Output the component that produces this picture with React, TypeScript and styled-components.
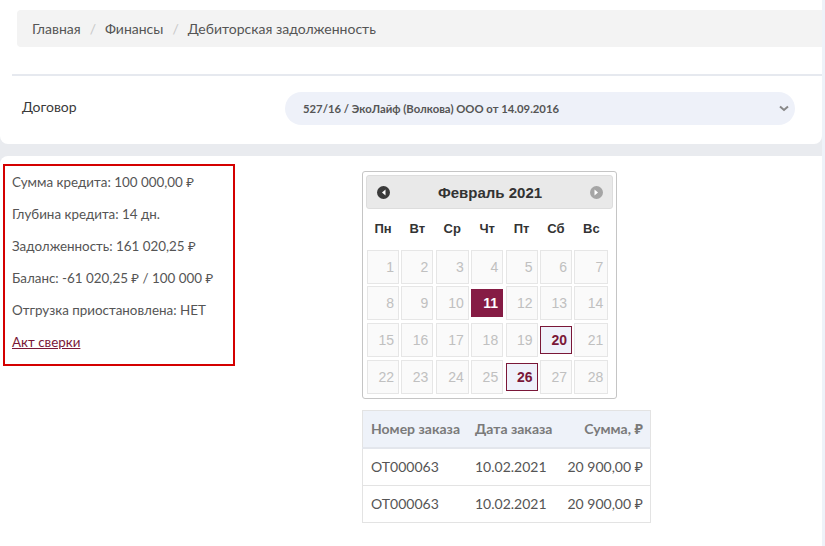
import styled, { createGlobalStyle } from 'styled-components';

const GlobalStyle = createGlobalStyle`
  html, body {
    margin: 0;
    padding: 0;
    background: #eef2f9;
  }
  body {
    font-family: Lato, "Noto Sans", sans-serif;
    color: #555;
  }
`;

const Page = styled.div`
  width: 822px;
  height: 546px;
  background: #e9ebef;
  display: flex;
  flex-direction: column;
  gap: 12px;
  overflow: hidden;
`;

const TopCard = styled.section`
  background: #fff;
  border-radius: 0 0 8px 8px;
  padding: 10px 0 19px 12px;
`;

const Breadcrumbs = styled.nav`
  display: flex;
  align-items: center;
  gap: 9px;
  height: 37px;
  margin-left: 5px;
  padding-left: 15px;
  background: #f3f3f3;
  border-radius: 4px 0 0 4px;
  font-size: 14px;
  color: #555;
`;

const Crumb = styled.span`
  color: #555;
`;

const Sep = styled.span`
  color: #c8c8c8;
`;

const Divider = styled.hr`
  margin: 27px 0 0;
  border: 0;
  border-top: 2px solid #e6e9ef;
`;

const ContractRow = styled.div`
  display: flex;
  align-items: center;
  height: 34px;
  margin-top: 15px;
`;

const ContractLabel = styled.label`
  width: 273px;
  box-sizing: border-box;
  padding: 0 0 4px 10px;
  font-size: 14px;
  color: #3a3a3a;
`;

const SelectBox = styled.div`
  width: 510px;
  height: 33px;
  border-radius: 17px;
  background: #eef1f9;
  display: flex;
  align-items: center;
  justify-content: space-between;
  padding: 0 6px 0 18px;
  box-sizing: border-box;
  font-size: 11.3px;
  font-weight: 700;
  color: #555;
`;

const BottomCard = styled.section`
  flex: 1;
  background: #fff;
  border-radius: 8px 0 0 0;
  display: flex;
  padding: 8px 0 0 3px;
  gap: 127px;
`;

const InfoBox = styled.div`
  width: 221px;
  height: 198px;
  border: 2px solid #d40000;
  padding: 0 0 0 7px;
  display: flex;
  flex-direction: column;
  font-size: 13.4px;
  color: #555;
`;

const InfoLine = styled.div`
  height: 32px;
  line-height: 32px;
`;

const ActLink = styled.a`
  height: 32px;
  line-height: 32px;
  color: #7a1738;
  text-decoration: underline;
`;

const Right = styled.div`
  display: flex;
  flex-direction: column;
  gap: 11px;
  padding-top: 7px;
`;

const Calendar = styled.div`
  width: 247px;
  border: 1px solid #c5c5c5;
  border-radius: 3px;
  padding: 3px 3px 4px;
  font-family: "Liberation Sans", Arial, sans-serif;
`;

const CalHeader = styled.div`
  height: 34px;
  background: #e9e9e9;
  border: 1px solid #dddddd;
  border-radius: 3px;
  display: flex;
  align-items: center;
  justify-content: space-between;
  padding: 0 9px 0 10px;
  box-sizing: border-box;
`;

const CalTitle = styled.div`
  font-size: 15px;
  font-weight: 700;
  color: #333;
`;

const NavDot = styled.span<{ $muted?: boolean }>`
  width: 13px;
  height: 13px;
  border-radius: 50%;
  background: ${(p) => (p.$muted ? '#a5a5a5' : '#3a3a3a')};
  display: flex;
  align-items: center;
  justify-content: center;
`;

const Grid = styled.div`
  display: grid;
  grid-template-columns: 32px 32px 33px 32px 32px 32px 34px;
  column-gap: 2.4px;
  row-gap: 2.7px;
  margin-top: 2px;
  padding-left: 1px;
`;

const WeekDay = styled.div`
  height: 36px;
  line-height: 36px;
  text-align: center;
  font-size: 13px;
  font-weight: 700;
  color: #333;
`;

const Day = styled.div<{ $kind?: 'active' | 'marked' }>`
  height: ${(p) => (p.$kind ? '26px' : '32px')};
  margin: ${(p) => (p.$kind ? '3px 0' : '0')};
  line-height: ${(p) => (p.$kind ? '26px' : '32px')};
  text-align: right;
  padding-right: 4px;
  font-size: 14px;
  border: 1px solid
    ${(p) => (p.$kind === 'marked' ? '#7a1738' : p.$kind === 'active' ? '#861c45' : '#e6e6e6')};
  background: ${(p) =>
    p.$kind === 'active' ? '#861c45' : p.$kind === 'marked' ? '#eff1fa' : '#fafafa'};
  color: ${(p) => (p.$kind === 'active' ? '#fff' : p.$kind === 'marked' ? '#7a1738' : '#c0c0c0')};
  font-weight: ${(p) => (p.$kind ? 700 : 400)};
`;

const Orders = styled.table`
  width: 288px;
  border-collapse: collapse;
  font-size: 14px;
  th,
  td {
    height: 36px;
    padding: 0 7px 0 8px;
    border-bottom: 1px solid #e3e3e3;
    white-space: nowrap;
  }
  th {
    background: #eef2f9;
    color: #7a7a7a;
    font-weight: 700;
    text-align: left;
    border-bottom: 2px solid #e3e6ec;
  }
  td {
    color: #555;
  }
  tr > *:first-child {
    border-left: 1px solid #e3e3e3;
  }
  tr > *:last-child {
    border-right: 1px solid #e3e3e3;
    text-align: right;
  }
  thead th {
    border-top: 1px solid #e3e3e3;
  }
`;

const weekDays = ['Пн', 'Вт', 'Ср', 'Чт', 'Пт', 'Сб', 'Вс'];
const days = Array.from({ length: 28 }, (_, i) => i + 1);

const kindOf = (d: number): 'active' | 'marked' | undefined => {
  if (d === 11) return 'active';
  if (d === 20 || d === 26) return 'marked';
  return undefined;
};

const orders = [
  { id: 'ОТ000063', date: '10.02.2021', sum: '20 900,00 ₽' },
  { id: 'ОТ000063', date: '10.02.2021', sum: '20 900,00 ₽' },
];

const App = () => {
  return (
    <>
      <GlobalStyle />
      <Page>
        <TopCard>
          <Breadcrumbs>
            <Crumb>Главная</Crumb>
            <Sep>/</Sep>
            <Crumb>Финансы</Crumb>
            <Sep>/</Sep>
            <Crumb>Дебиторская задолженность</Crumb>
          </Breadcrumbs>
          <Divider />
          <ContractRow>
            <ContractLabel>Договор</ContractLabel>
            <SelectBox>
              <span>527/16 / ЭкоЛайф (Волкова) ООО от 14.09.2016</span>
              <svg width="10" height="7" viewBox="0 0 10 7">
                <path d="M1 1.5 L5 5 L9 1.5" fill="none" stroke="#888" strokeWidth="2" />
              </svg>
            </SelectBox>
          </ContractRow>
        </TopCard>
        <BottomCard>
          <InfoBox>
            <InfoLine>Сумма кредита: 100 000,00 ₽</InfoLine>
            <InfoLine>Глубина кредита: 14 дн.</InfoLine>
            <InfoLine>Задолженность: 161 020,25 ₽</InfoLine>
            <InfoLine>Баланс: -61 020,25 ₽ / 100 000 ₽</InfoLine>
            <InfoLine>Отгрузка приостановлена: НЕТ</InfoLine>
            <ActLink href="#">Акт сверки</ActLink>
          </InfoBox>
          <Right>
            <Calendar>
              <CalHeader>
                <NavDot>
                  <svg width="6" height="7" viewBox="0 0 6 7">
                    <path d="M4.5 0.5 L1 3.5 L4.5 6.5 Z" fill="#fff" />
                  </svg>
                </NavDot>
                <CalTitle>Февраль 2021</CalTitle>
                <NavDot $muted>
                  <svg width="6" height="7" viewBox="0 0 6 7">
                    <path d="M1.5 0.5 L5 3.5 L1.5 6.5 Z" fill="#fff" />
                  </svg>
                </NavDot>
              </CalHeader>
              <Grid>
                {weekDays.map((w) => (
                  <WeekDay key={w}>{w}</WeekDay>
                ))}
                {days.map((d) => (
                  <Day key={d} $kind={kindOf(d)}>
                    {d}
                  </Day>
                ))}
              </Grid>
            </Calendar>
            <Orders>
              <thead>
                <tr>
                  <th>Номер заказа</th>
                  <th>Дата заказа</th>
                  <th>Сумма, ₽</th>
                </tr>
              </thead>
              <tbody>
                {orders.map((o, i) => (
                  <tr key={i}>
                    <td>{o.id}</td>
                    <td>{o.date}</td>
                    <td>{o.sum}</td>
                  </tr>
                ))}
              </tbody>
            </Orders>
          </Right>
        </BottomCard>
      </Page>
    </>
  );
};

export default App;
